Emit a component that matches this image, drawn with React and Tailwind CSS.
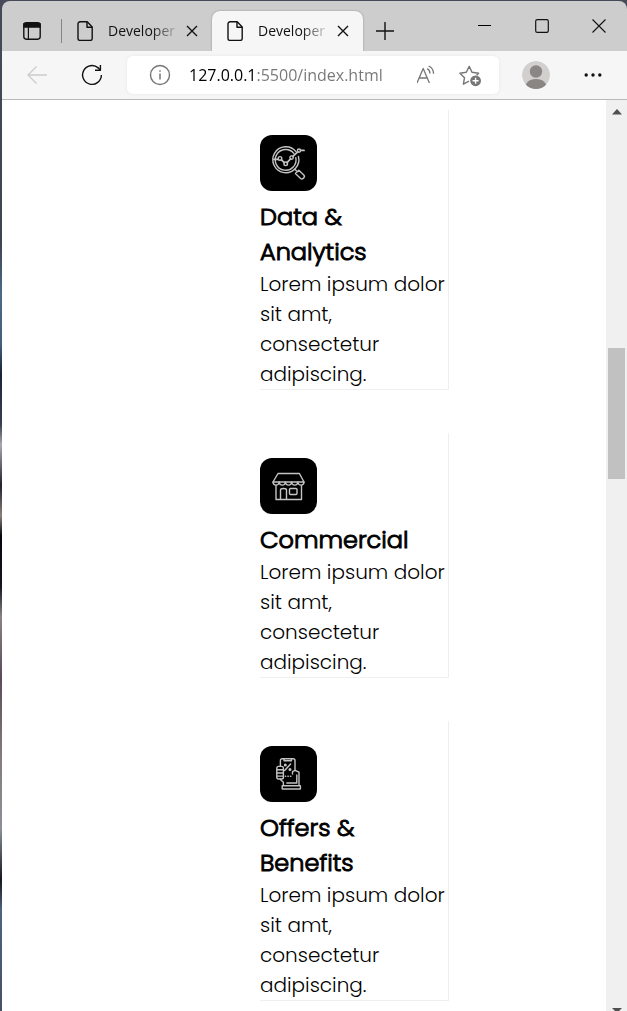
import React from "react";

const services = [
  { title: "Data & Analytics", icon: AnalyticsIcon },
  { title: "Commercial", icon: StoreIcon },
  { title: "Offers & Benefits", icon: OffersIcon },
];

function IconTile({ children }) {
  return (
    <svg
      width="57"
      height="56"
      viewBox="0 0 57 56"
      fill="none"
      stroke="#c4c4c4"
      strokeWidth="1.4"
      strokeLinejoin="round"
      strokeLinecap="round"
      aria-hidden="true"
    >
      <rect width="57" height="56" rx="12" fill="#000" stroke="none" />
      {children}
    </svg>
  );
}

function AnalyticsIcon() {
  return (
    <IconTile>
      <path d="M36 16.6A13 13 0 1 0 38.4 21.4" />
      <path d="M33.8 18.4A10.4 10.4 0 1 0 35.8 22.6" />
      <path d="M14 24.3h4.2M21.4 24.8l3 2.8M27 27.6l3.4-3.6M32.8 21.4l5-4.6M40.6 15.4H44" strokeWidth="1.8" />
      <circle cx="20" cy="23.4" r="1.8" />
      <circle cx="25.7" cy="28.8" r="1.8" />
      <circle cx="31.6" cy="22.6" r="1.7" />
      <circle cx="39" cy="15.6" r="1.6" />
      <path d="M34.8 34.2l1.6 1.6" />
      <path d="M35.4 38.6l3.4-3.3 5 4.8c1.8 1.8-1.3 5-3.2 3.4z" />
    </IconTile>
  );
}

function StoreIcon() {
  return (
    <IconTile>
      <path d="M18 15.5h21.4L44 24H13z" />
      <path d="M13 24c.2 4.2 5.6 4.2 6.2 0 .4 4.2 5.8 4.2 6.2 0 .4 4.2 5.8 4.2 6.2 0 .4 4.2 5.8 4.2 6.2 0 .6 4.2 6 4.2 6.2 0" />
      <path d="M16 27.6V41.5h25.5V27.6M20.5 41.5V32c0-2 6-2 6 0v9.5" />
      <rect x="29.5" y="30.5" width="7.5" height="6" rx="1" />
    </IconTile>
  );
}

function OffersIcon() {
  return (
    <IconTile>
      <path d="M20.4 20v-5.4c0-1 .8-1.8 1.8-1.8h11c1 0 1.8.8 1.8 1.8v10" />
      <path d="M24 13v1.8h7.4V13" />
      <path d="M30.6 18l-6 6.4" strokeWidth="1.5" />
      <circle cx="25.3" cy="19" r=".8" />
      <circle cx="30" cy="23.4" r=".8" />
      <rect x="16.8" y="20.4" width="6.6" height="12.6" rx="1.8" />
      <path d="M17 23.8h6M17 27h6M17 30.1h6" />
      <path d="M20.4 33.2c.4 2.2 3 1.6 3 3.4v2.8M35 24.6c-1.8 0-3.2 1.4-2.4 3.4M35 24.4l4 1.8v13M36.8 29v8h-10" />
      <path d="M25.4 30.2h.2M28 30.2h.2M30.6 30.2h.2" strokeWidth="1.6" />
      <rect x="22.2" y="39.8" width="18.2" height="3.2" />
    </IconTile>
  );
}

function Glyph({ size, children, className }) {
  return (
    <svg
      width={size}
      height={size}
      viewBox={`0 0 ${size} ${size}`}
      fill="none"
      stroke="currentColor"
      strokeWidth="1.4"
      strokeLinejoin="round"
      className={className}
      aria-hidden="true"
    >
      {children}
    </svg>
  );
}

function Tab({ active }) {
  return (
    <div
      className={
        active
          ? "flex h-10 w-[151px] shrink-0 items-center rounded-t-lg bg-[#f6f6f6] pl-4 pr-3 shadow-[0_0_2px_rgba(0,0,0,0.35)]"
          : "flex h-10 w-[150px] shrink-0 items-center pl-4 pr-3"
      }
    >
      <Glyph size={20} className="-ml-0.5 shrink-0">
        <path d="M4 .8h7.2L16.2 6v11.4a2 2 0 0 1-2 2H4a2 2 0 0 1-2-2V2.8a2 2 0 0 1 2-2z" />
        <path d="M11 1v5.200h5.200" />
      </Glyph>
      <button
        type="button"
        className="ml-3 min-w-0 flex-1 whitespace-nowrap text-left text-sm/5"
      >
        <span className="bg-[linear-gradient(90deg,#111_65%,#11111130)] bg-clip-text text-transparent">Developer</span>
      </button>
      <button type="button" aria-label="Close tab" className="ml-2 grid size-4 shrink-0 place-items-center">
        <Glyph size={12}>
          <path d="M1 1l10 10M11 1L1 11" />
        </Glyph>
      </button>
    </div>
  );
}

function TitleBar() {
  return (
    <header className="flex h-[50px] shrink-0 items-end overflow-hidden rounded-t-lg bg-[#cdcdcd]">
      <button type="button" aria-label="Tab actions" className="ml-5 grid h-10 w-5 place-items-center">
        <Glyph size={20}>
          <rect x="1.8" y="1.8" width="16.4" height="16.4" rx="2.6" />
          <path d="M2 2.6h16V6H2z" fill="currentColor" />
          <path d="M6.4 6v12" strokeWidth="1.2" />
        </Glyph>
      </button>
      <div className="mb-2 ml-[19px] h-6 w-px shrink-0 bg-[#858585]" />
      <nav aria-label="Tabs" className="flex shrink-0">
        <Tab />
        <Tab active />
      </nav>
      <button type="button" aria-label="New tab" className="ml-3 grid h-10 w-5 shrink-0 place-items-center">
        <Glyph size={18}>
          <path d="M9 0v18M0 9h18" />
        </Glyph>
      </button>
      <div className="ml-auto flex h-[50px] shrink-0">
        <button type="button" aria-label="Minimize" className="grid w-[57px] place-items-center">
          <Glyph size={14}>
            <path d="M0 6.5h13" stroke="#000" strokeWidth="1" />
          </Glyph>
        </button>
        <button type="button" aria-label="Maximize" className="grid w-[57px] place-items-center">
          <Glyph size={14}>
            <rect x=".7" y=".7" width="12.6" height="12.6" rx="1.6" strokeWidth="1.2" />
          </Glyph>
        </button>
        <button type="button" aria-label="Close" className="grid w-[57px] place-items-center">
          <Glyph size={14}>
            <path d="M.5.5l13 13M13.5.5l-13 13" strokeWidth="1.1" />
          </Glyph>
        </button>
      </div>
    </header>
  );
}

function Toolbar() {
  return (
    <div className="flex h-[49px] shrink-0 items-center border-b border-[#b9b9b9] bg-[#f6f6f6]">
      <button type="button" aria-label="Back" disabled className="ml-6 text-[#cccccc]">
        <Glyph size={22}>
          <path d="M21 11H1.5M10.5 2.5L2 11l8.5 8.5" />
        </Glyph>
      </button>
      <button type="button" aria-label="Refresh" className="ml-8">
        <Glyph size={24}>
          <path d="M21.4 12a9.4 9.4 0 1 1-3.2-7.1l2.2 2" />
          <path d="M20.4 2v5.2H15" />
        </Glyph>
      </button>
      <div className="ml-[23px] flex h-[38px] min-w-0 flex-1 items-center rounded-md bg-white pl-[22px] pr-4 text-[#767676] shadow-[0_0_4px_rgba(0,0,0,0.06)]">
        <button type="button" aria-label="Site information" className="shrink-0">
          <Glyph size={22}>
            <circle cx="11" cy="11" r="9.5" />
            <path d="M11 9.6v6M11 6.2v1.6" strokeWidth="1.5" />
          </Glyph>
        </button>
        <input
          aria-label="Address"
          defaultValue="127.0.0.1:5500/index.html"
          className="ml-[18px] min-w-0 flex-1 bg-[linear-gradient(90deg,#000_67px,#767676_67px)] bg-clip-text text-base/6 text-transparent outline-none"
        />
        <button type="button" aria-label="Read aloud" className="shrink-0">
          <Glyph size={22}>
            <path d="M0 19L6.2 4.5 12.4 19M2.200 14h8" strokeWidth="1.3" />
            <path d="M10.2 4.6c1.8 1 2.8 2.8 2.8 5M11.6 2c3 1.3 4.9 4.2 5 7.8" strokeWidth="1.3" />
          </Glyph>
        </button>
        <button type="button" aria-label="Add to favorites" className="ml-5 shrink-0">
          <Glyph size={24}>
            <path d="M10 18.2l-5.6 3 1.1-6.500-4.600-4.500 6.400-.9 2.900-5.900L13 9.300l6.600.9-2 2" />
            <circle cx="16.600" cy="17.800" r="5.400" fill="currentColor" stroke="none" />
            <path d="M16.600 14.800v6M13.600 17.800h6" stroke="#fff" />
          </Glyph>
        </button>
      </div>
      <button type="button" aria-label="Profile" className="ml-[23px] shrink-0">
        <svg width="28" height="28" viewBox="0 0 28 28" aria-hidden="true">
          <defs>
            <clipPath id="avatar">
              <circle cx="14" cy="14" r="14" />
            </clipPath>
          </defs>
          <g clipPath="url(#avatar)">
            <circle cx="14" cy="14" r="14" fill="#d2d0ce" />
            <circle cx="14" cy="10.5" r="6.2" fill="#8a8683" />
            <path d="M3 28c0-6 4-10 11-10s11 4 11 10z" fill="#8a8683" />
          </g>
        </svg>
      </button>
      <button type="button" aria-label="Settings and more" className="ml-[34px] mr-[25px] shrink-0">
        <svg width="18" height="18" viewBox="0 0 18 18" fill="#111" aria-hidden="true">
          <circle cx="2.2" cy="9" r="1.7" />
          <circle cx="9" cy="9" r="1.7" />
          <circle cx="15.8" cy="9" r="1.7" />
        </svg>
      </button>
    </div>
  );
}

function ServiceCard({ title, icon: Icon }) {
  return (
    <article className="w-[189px] border-b border-r border-[#efefef] pt-[25px]">
      <Icon />
      <h2 className="mt-2 text-2xl/[35px] font-light [-webkit-text-stroke:1px_#000]">{title}</h2>
      <p className="text-xl/[30px] font-light">
        Lorem ipsum dolor sit amt, consectetur adipiscing.
      </p>
    </article>
  );
}

function Scrollbar() {
  return (
    <div className="flex w-[21px] shrink-0 flex-col items-center bg-[#f0f0f0]" aria-hidden="true">
      <svg width="10" height="24" viewBox="0 0 10 24" className="shrink-0">
        <path d="M0 14.5L5 9l5 5.5z" fill="#505050" />
      </svg>
      <div className="grow-[224]" />
      <div className="w-[17px] grow-[131] bg-[#c1c1c1]" />
      <div className="grow-[528]" />
      <svg width="10" height="4" viewBox="0 0 10 4" className="shrink-0">
        <path d="M0 1h10L7 4H3z" fill="#505050" />
      </svg>
    </div>
  );
}

export default function App() {
  return (
    <div className="flex h-screen flex-col overflow-hidden bg-[linear-gradient(180deg,#474a58_0%,#3f4352_24%,#4a6a88_29%,#44607c_34%,#18233a_37%,#3a3f50_42%,#a8a8b0_44%,#20222e_48%,#8c8078_51%,#04060e_53%,#15151f_58%,#8a8288_61%,#5c4c58_67%,#847c80_75%,#8b9096_82%,#15191f_87%,#50637e_90%,#46506a_100%)] pl-0.5 pt-px font-['Segoe_UI','Open_Sans',sans-serif] text-[#111]">
      <TitleBar />
      <Toolbar />
      <div className="flex min-h-0 flex-1 bg-white">
        <main className="flex min-w-0 flex-1 flex-col gap-[43px] overflow-hidden pl-[258px] pt-[10px] font-['Poppins','Inter',sans-serif] text-black">
          {services.map((service) => (
            <ServiceCard key={service.title} {...service} />
          ))}
        </main>
        <Scrollbar />
      </div>
    </div>
  );
}
